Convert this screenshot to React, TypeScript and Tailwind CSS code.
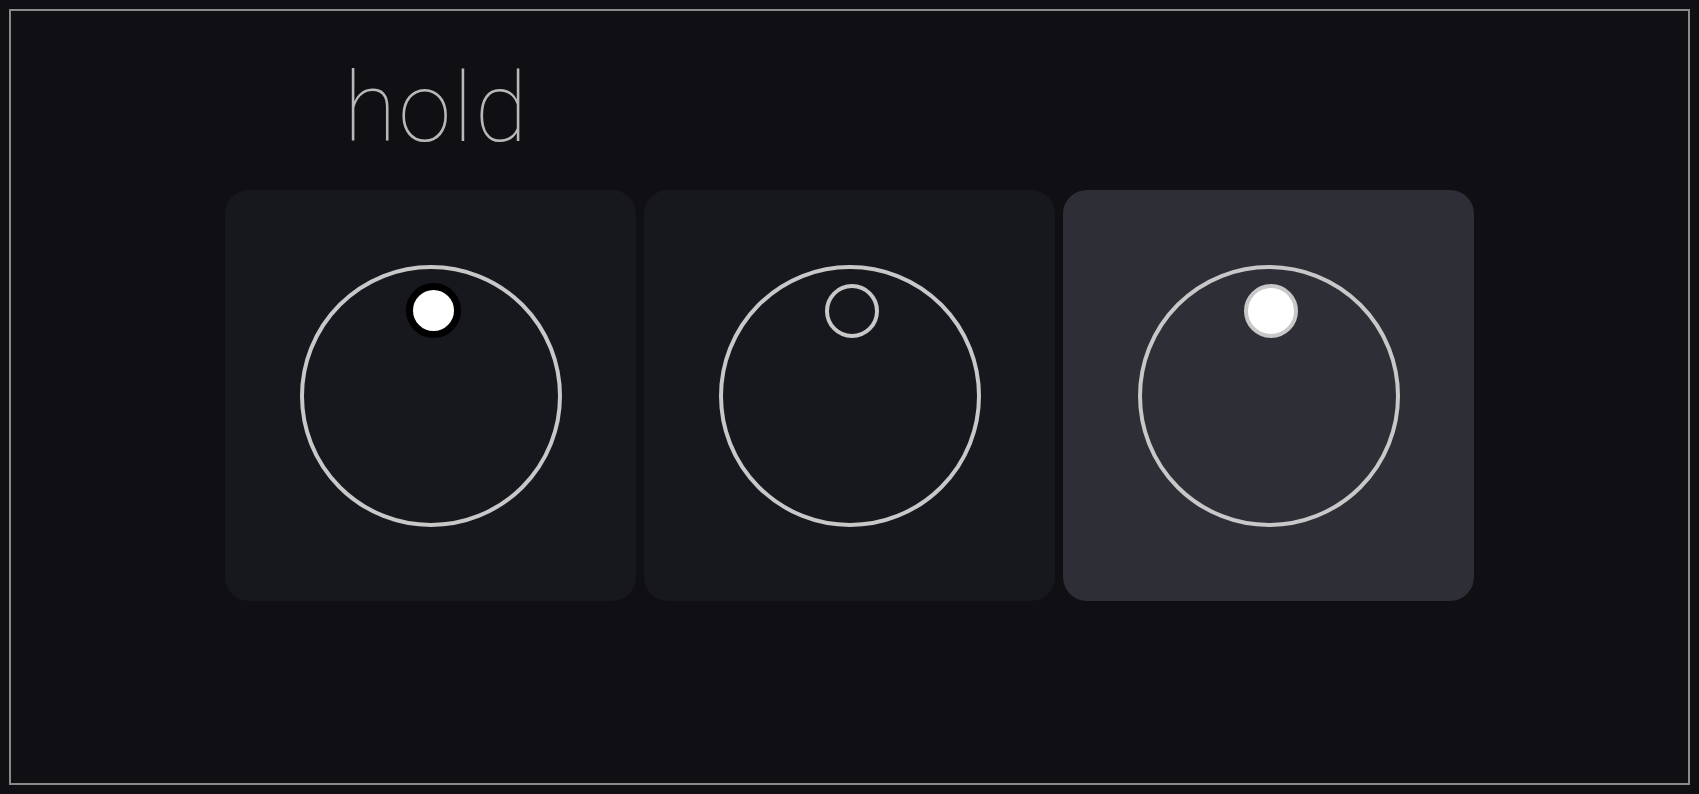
import React from 'react';

type DotStyle = 'active' | 'outline' | 'filled';

const Knob: React.FC<{ dot: DotStyle }> = ({ dot }) => {
  const dotClass =
    dot === 'active'
      ? 'w-[55px] h-[55px] top-[14px] left-[102px] bg-white border-[7px] border-black'
      : dot === 'outline'
        ? 'w-[54px] h-[54px] top-[15px] left-[102px] border-[4px] border-[#c8c8c8]'
        : 'w-[54px] h-[54px] top-[15px] left-[102px] bg-white border-[4px] border-[#c8c8c8]';

  return (
    <div className="relative w-[262px] h-[262px] rounded-full border-4 border-[#c8c8c8]">
      <div className={`absolute rounded-full ${dotClass}`} />
    </div>
  );
};

const Pad: React.FC<{ dot: DotStyle; highlighted?: boolean }> = ({ dot, highlighted }) => (
  <div
    className={`w-[411px] h-[411px] rounded-3xl flex items-center justify-center ${
      highlighted ? 'bg-[#2e2f36]' : 'bg-[#17181e]'
    }`}
  >
    <Knob dot={dot} />
  </div>
);

export default function App() {
  return (
    <div className="min-h-screen bg-[#100f13] p-[9px]" style={{ fontFamily: 'Roboto, "Liberation Sans", sans-serif' }}>
      <div className="h-[776px] border-2 border-[#8a8a8a] flex flex-col items-center pt-[49px]">
        <div className="grid grid-cols-3 gap-2 w-[1249px]">
          <div className="flex justify-center pl-[12px]">
            <span className="text-[96px] leading-none font-thin tracking-[2px] text-[#b8b8b8]">hold</span>
          </div>
        </div>
        <div className="flex gap-2 mt-[34px]">
          <Pad dot="active" />
          <Pad dot="outline" />
          <Pad dot="filled" highlighted />
        </div>
      </div>
    </div>
  );
}
